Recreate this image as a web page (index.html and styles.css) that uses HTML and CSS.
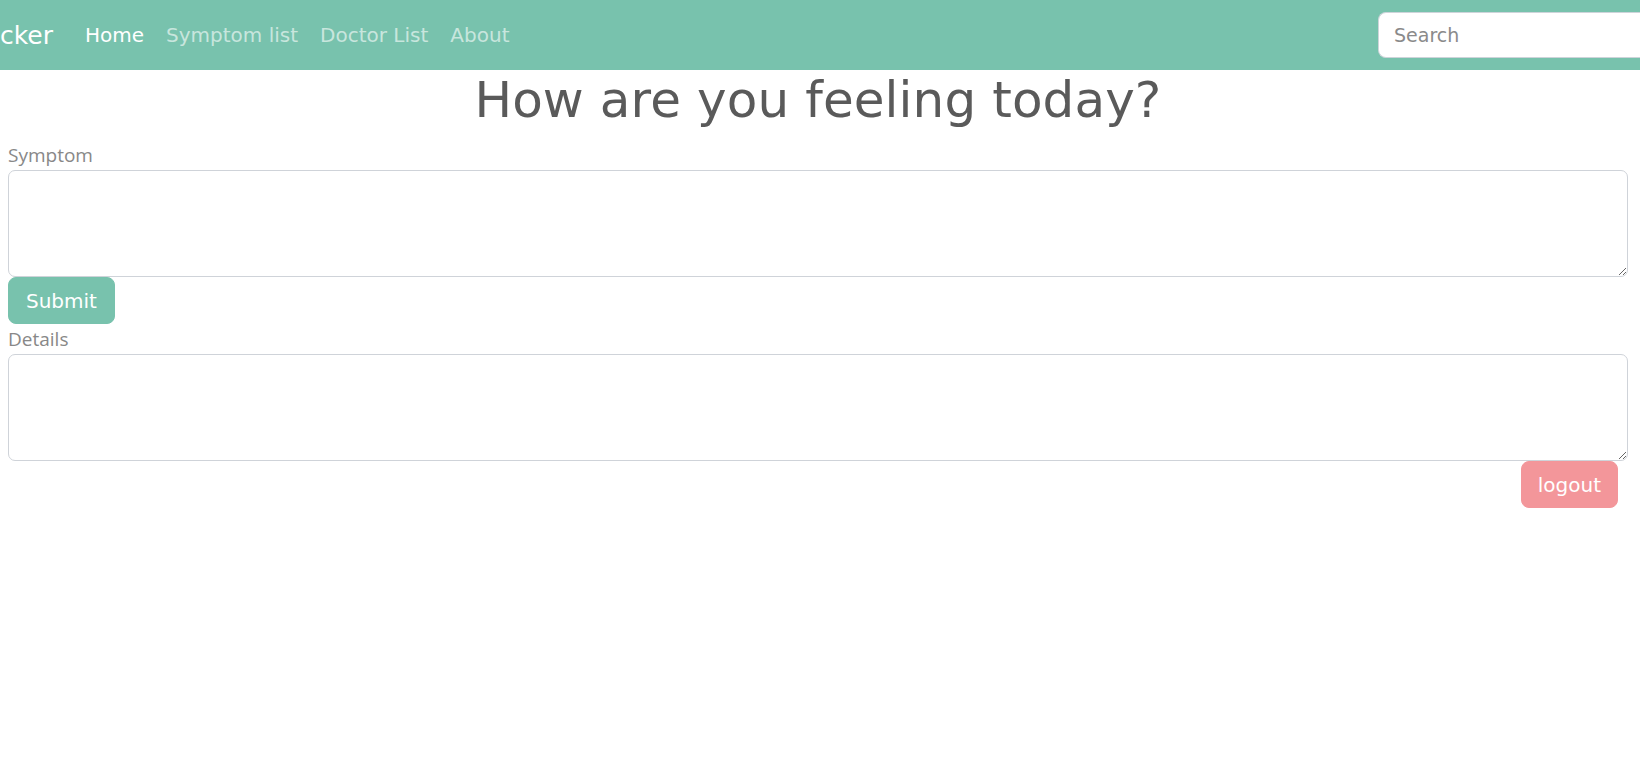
FILE: index.html
```html
<!DOCTYPE html>
<html lang="en">
<head>
<meta charset="utf-8">
<title>Symptom Tracker</title>
<link rel="stylesheet" href="styles.css">
</head>
<body>
<nav class="navbar">
  <span class="brand">cker</span>
  <ul class="nav-links">
    <li><a class="nav-link active" href="#">Home</a></li>
    <li><a class="nav-link" href="#">Symptom list</a></li>
    <li><a class="nav-link" href="#">Doctor List</a></li>
    <li><a class="nav-link" href="#">About</a></li>
  </ul>
  <form class="search-form">
    <input class="search-input" type="search" placeholder="Search">
  </form>
</nav>
<main class="content">
  <h1 class="title">How are you feeling today?</h1>
  <form class="symptom-form">
    <label class="field-label" for="symptom">Symptom</label>
    <textarea class="field" id="symptom" rows="3"></textarea>
    <div class="row">
      <button type="button" class="btn btn-primary">Submit</button>
    </div>
    <label class="field-label" for="details">Details</label>
    <textarea class="field" id="details" rows="3"></textarea>
    <div class="row row-end">
      <button type="button" class="btn btn-secondary">logout</button>
    </div>
  </form>
</main>
</body>
</html>
```

FILE: styles.css
```css
* {
  box-sizing: border-box;
}

html, body {
  margin: 0;
  padding: 0;
  background: #ffffff;
}

body {
  font-family: "DejaVu Sans", sans-serif;
  color: #888888;
  overflow: hidden;
}

.navbar {
  height: 70px;
  background: #78c2ad;
  display: flex;
  align-items: center;
  padding: 0;
}

.brand {
  font-size: 25px;
  color: #ffffff;
  margin-right: 22px;
  line-height: 1;
}

.nav-links {
  list-style: none;
  margin: 0;
  padding: 0;
  display: flex;
  gap: 2px;
}

.nav-link {
  display: block;
  padding: 8px 10px;
  font-size: 20px;
  line-height: 30px;
  color: rgba(255, 255, 255, 0.6);
  text-decoration: none;
}

.nav-link.active {
  color: #ffffff;
}

.search-form {
  margin: 0 0 0 auto;
  display: flex;
}

.search-input {
  width: 262px;
  height: 46px;
  padding: 0 0 0 15px;
  border: 1px solid #ced4da;
  border-right: none;
  border-radius: 8px 0 0 8px;
  background: #ffffff;
  font-family: "DejaVu Sans", sans-serif;
  font-size: 19px;
  color: #5a5a5a;
  outline: none;
}

.search-input::placeholder {
  color: #8a8a8a;
}

.content {
  padding: 0 12px 0 8px;
}

.title {
  margin: 0 0 10px 0;
  font-size: 50px;
  font-weight: normal;
  line-height: 60px;
  letter-spacing: 0.1px;
  text-align: center;
  color: #5a5a5a;
}

.symptom-form {
  display: flex;
  flex-direction: column;
}

.field-label {
  font-family: "Open Sans", sans-serif;
  font-size: 19px;
  line-height: 30px;
  color: #888888;
}

.field {
  display: block;
  width: 100%;
  height: 107px;
  padding: 7px 15px;
  border: 1px solid #cfd3d9;
  border-radius: 7px;
  font-size: 20px;
  line-height: 30px;
  background: #ffffff;
  resize: both;
  margin: 0;
}

.row {
  display: flex;
}

.row-end {
  justify-content: flex-end;
  padding-right: 10px;
}

.btn {
  font-family: "DejaVu Sans", sans-serif;
  font-size: 20px;
  line-height: 30px;
  height: 47px;
  padding: 7px 17px;
  border: 1px solid transparent;
  border-radius: 8px;
  color: #ffffff;
  cursor: pointer;
}

.btn-primary {
  background: #78c2ad;
  border-color: #78c2ad;
}

.btn-secondary {
  padding: 7px 16px;
  background: #f3969a;
  border-color: #f3969a;
}
```
